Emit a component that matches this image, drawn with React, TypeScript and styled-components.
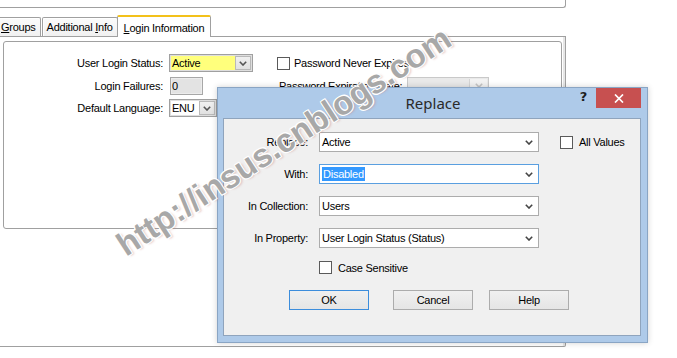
import React from 'react';
import styled, { createGlobalStyle } from 'styled-components';

const GlobalStyle = createGlobalStyle`
  html, body {
    margin: 0;
    padding: 0;
    background: #fff;
  }
  body {
    font-family: "Liberation Sans", Arial, sans-serif;
    font-size: 11px;
    letter-spacing: -0.25px;
    color: #000;
  }
`;

const Page = styled.div`
  position: relative;
  width: 677px;
  height: 358px;
  overflow: hidden;
  background: #fff;
`;

const PrevGroup = styled.div`
  width: 565px;
  height: 7px;
  border-right: 1px solid #a0a0a0;
  border-bottom: 1px solid #a0a0a0;
  border-bottom-right-radius: 3px;
`;

const TabStrip = styled.div`
  display: flex;
  align-items: flex-end;
  height: 21px;
  margin-top: 7px;
`;

const Tab = styled.div<{ $active?: boolean; $first?: boolean }>`
  position: relative;
  z-index: ${p => (p.$active ? 2 : 1)};
  box-sizing: border-box;
  height: ${p => (p.$active ? 22 : 19)}px;
  margin-bottom: ${p => (p.$active ? -1 : 0)}px;
  margin-left: ${p => (p.$first ? -4 : p.$active ? -1 : 1)}px;
  padding: 0 ${p => (p.$active ? 6 : 4)}px;
  display: flex;
  align-items: center;
  padding-top: ${p => (p.$active ? 1 : 0)}px;
  border: 1px solid #a0a0a0;
  border-bottom: none;
  border-top: ${p => (p.$active ? '2px solid #f3c11a' : '1px solid #a0a0a0')};
  border-radius: 2px 2px 0 0;
  background: ${p => (p.$active ? '#fff' : 'linear-gradient(#fbfbfb, #f1f1f1)')};
  box-shadow: ${p => (p.$active ? 'none' : 'inset 1px 1px 0 #fff')};
  white-space: nowrap;
`;

const Key = styled.span`
  text-decoration: underline;
`;

const TabPage = styled.div`
  box-sizing: border-box;
  width: 566px;
  height: 311px;
  border-top: 1px solid #a0a0a0;
  border-right: 1px solid #a0a0a0;
  border-bottom: 1px solid #a0a0a0;
  border-bottom-right-radius: 2px;
  box-shadow: inset -2px 0 0 #e6e6e6;
  padding-top: 4px;
  padding-left: 3px;
`;

const GroupBox = styled.div`
  box-sizing: border-box;
  width: 559px;
  height: 188px;
  border: 1px solid #a0a0a0;
  border-radius: 3px;
  padding-top: 12px;
`;

const FormGrid = styled.div`
  display: grid;
  grid-template-columns: 165px 108px 1fr;
  grid-template-rows: 18px 18px 18px;
  row-gap: 4.5px;
  align-items: center;
`;

const FormLabel = styled.div`
  text-align: right;
  padding-right: 6px;
  white-space: nowrap;
`;

const ClassicCombo = styled.div<{ $width: number }>`
  box-sizing: border-box;
  width: ${p => p.$width}px;
  height: 18px;
  display: flex;
  border: 1px solid #a0a0a0;
  box-shadow: inset 0 0 0 1px #dedede;
  padding: 1px;
  background: #fff;
`;

const ClassicValue = styled.div<{ $fill?: string }>`
  flex: 1;
  display: flex;
  align-items: center;
  padding-left: 1px;
  background: ${p => p.$fill || '#fff'};
`;

const DropButton = styled.div`
  box-sizing: border-box;
  width: 16px;
  display: flex;
  align-items: center;
  justify-content: center;
  background: linear-gradient(#f0f0f0, #e1e1e1);
  border: 1px solid #b9b9b9;
`;

const ReadOnlyBox = styled.div`
  box-sizing: border-box;
  width: 33px;
  height: 18px;
  margin-left: 1px;
  display: flex;
  align-items: center;
  padding-left: 1px;
  background: #e3e3e3;
  border: 1px solid #a7a7a7;
  box-shadow: inset 0 0 0 1px #ececec;
`;

const CheckRow = styled.label`
  display: flex;
  align-items: center;
  gap: 4px;
  white-space: nowrap;
`;

const CheckBox = styled.span`
  box-sizing: border-box;
  width: 13px;
  height: 13px;
  border: 1px solid #5a5a5a;
  background: #fff;
`;

const ExpiryRow = styled.div`
  display: flex;
  align-items: center;
  padding-left: 2px;
`;

const ExpiryLabel = styled.div`
  width: 128px;
  white-space: nowrap;
  overflow: hidden;
`;

const DisabledCombo = styled.div`
  box-sizing: border-box;
  width: 82px;
  height: 18px;
  display: flex;
  border: 1px solid #c9c9c9;
  background: #e9e9e9;
  padding: 1px;
`;

const DisabledDrop = styled.div`
  width: 17px;
  margin-left: auto;
  display: flex;
  align-items: center;
  justify-content: center;
  background: #f2f2f2;
  border-left: 1px solid #d4d4d4;
`;

const Dialog = styled.div`
  position: absolute;
  left: 217px;
  top: 87px;
  z-index: 5;
  box-sizing: border-box;
  width: 431px;
  height: 256px;
  display: flex;
  flex-direction: column;
  padding: 0 6px 6px 5px;
  background: #aecae9;
  border: 1px solid #8aa5c4;
  box-shadow: 0 0 6px rgba(0, 0, 0, 0.18);
`;

const TitleBar = styled.div`
  display: grid;
  grid-template-columns: 1fr auto 1fr;
  height: 30px;
`;

const Title = styled.div`
  font-family: "Noto Sans", "Open Sans", sans-serif;
  font-size: 15px;
  letter-spacing: 0;
  line-height: 30px;
  color: #2a2a2a;
  margin-left: 2px;
`;

const TitleButtons = styled.div`
  justify-self: end;
  display: flex;
  align-items: flex-start;
`;

const HelpGlyph = styled.div`
  font-family: "DejaVu Sans", sans-serif;
  font-weight: bold;
  font-size: 13px;
  line-height: 20px;
  color: #1e1e1e;
  margin-right: 9px;
  margin-top: -1px;
`;

const CloseButton = styled.div`
  width: 45px;
  height: 20px;
  display: flex;
  align-items: center;
  justify-content: center;
  background: #c75050;
`;

const Client = styled.div`
  flex: 1;
  background: #f0f0f0;
  border: 1px solid #8fa4bd;
  padding-top: 13px;
`;

const FieldGrid = styled.div`
  display: grid;
  grid-template-columns: 95px 220px auto;
  grid-auto-rows: 20px;
  row-gap: 12px;
  align-items: center;
`;

const FieldLabel = styled.div`
  text-align: right;
  padding-right: 11px;
  white-space: nowrap;
`;

const Combo = styled.div<{ $focused?: boolean }>`
  box-sizing: border-box;
  height: 20px;
  display: flex;
  align-items: center;
  justify-content: space-between;
  padding: 0 5px 0 2px;
  background: #fff;
  border: 1px solid ${p => (p.$focused ? '#5a9fe0' : '#acacac')};
`;

const Selected = styled.span`
  background: #3399ff;
  color: #fff;
  padding: 1px 1px;
`;

const SideCheck = styled(CheckRow)`
  padding-left: 21px;
  gap: 6px;
`;

const CaseRow = styled(CheckRow)`
  margin-top: 13px;
  padding-left: 95px;
  gap: 6px;
`;

const ButtonRow = styled.div`
  display: flex;
  margin-top: 16px;
  padding-left: 65px;
`;

const Button = styled.div<{ $default?: boolean; $gap?: number }>`
  box-sizing: border-box;
  width: 80px;
  height: 20px;
  margin-left: ${p => p.$gap || 0}px;
  display: flex;
  align-items: center;
  justify-content: center;
  background: linear-gradient(#f0f0f0, #e5e5e5);
  border: 1px solid ${p => (p.$default ? '#3c8ddc' : '#acacac')};
`;

const Watermark = styled.div`
  position: absolute;
  left: 126px;
  top: 229px;
  z-index: 10;
  font-family: "Liberation Sans", Arial, sans-serif;
  font-weight: bold;
  font-size: 33px;
  line-height: 33px;
  letter-spacing: 0;
  white-space: nowrap;
  color: #a8a8a8;
  transform: rotate(-33deg);
  transform-origin: 0 28px;
  text-shadow: 1px 1px 0 #fff, -1px -1px 0 #fff, 1px -1px 0 #fff, -1px 1px 0 #fff, 2px 2px 2px rgba(190, 120, 120, 0.35);
  pointer-events: none;
`;

const Chevron = ({ color = '#444', w = 8 }: { color?: string; w?: number }) => (
  <svg width={w} height="5" viewBox="0 0 8 5">
    <path d="M0.8 0.8 L4 4 L7.2 0.8" fill="none" stroke={color} strokeWidth="1.6" />
  </svg>
);

const CloseGlyph = () => (
  <svg width="10" height="9" viewBox="0 0 10 9">
    <path d="M1 0.5 L9 8.5 M9 0.5 L1 8.5" stroke="#fff" strokeWidth="1.7" />
  </svg>
);

const ReplaceDialog = () => (
  <Dialog>
    <TitleBar>
      <span />
      <Title>Replace</Title>
      <TitleButtons>
        <HelpGlyph>?</HelpGlyph>
        <CloseButton>
          <CloseGlyph />
        </CloseButton>
      </TitleButtons>
    </TitleBar>
    <Client>
      <FieldGrid>
        <FieldLabel>Replace:</FieldLabel>
        <Combo>
          <span>Active</span>
          <Chevron />
        </Combo>
        <SideCheck>
          <CheckBox />
          All Values
        </SideCheck>

        <FieldLabel>With:</FieldLabel>
        <Combo $focused>
          <Selected>Disabled</Selected>
          <Chevron />
        </Combo>
        <span />

        <FieldLabel>In Collection:</FieldLabel>
        <Combo>
          <span>Users</span>
          <Chevron />
        </Combo>
        <span />

        <FieldLabel>In Property:</FieldLabel>
        <Combo>
          <span>User Login Status (Status)</span>
          <Chevron />
        </Combo>
        <span />
      </FieldGrid>
      <CaseRow>
        <CheckBox />
        Case Sensitive
      </CaseRow>
      <ButtonRow>
        <Button $default>OK</Button>
        <Button $gap={24}>Cancel</Button>
        <Button $gap={16}>Help</Button>
      </ButtonRow>
    </Client>
  </Dialog>
);

export default function App() {
  return (
    <Page>
      <GlobalStyle />
      <PrevGroup />
      <TabStrip>
        <Tab $first>
          <span>
            <Key>G</Key>roups
          </span>
        </Tab>
        <Tab>
          <span>
            Additional <Key>I</Key>nfo
          </span>
        </Tab>
        <Tab $active>
          <span>
            <Key>L</Key>ogin Information
          </span>
        </Tab>
      </TabStrip>
      <TabPage>
        <GroupBox>
          <FormGrid>
            <FormLabel>User Login Status:</FormLabel>
            <ClassicCombo $width={84}>
              <ClassicValue $fill="#ffff7c">Active</ClassicValue>
              <DropButton>
                <Chevron color="#555" />
              </DropButton>
            </ClassicCombo>
            <CheckRow>
              <CheckBox />
              Password Never Expires
            </CheckRow>

            <FormLabel>Login Failures:</FormLabel>
            <ReadOnlyBox>0</ReadOnlyBox>
            <ExpiryRow>
              <ExpiryLabel>Password Expiration Date:</ExpiryLabel>
              <DisabledCombo>
                <DisabledDrop>
                  <Chevron color="#c4c4c4" />
                </DisabledDrop>
              </DisabledCombo>
            </ExpiryRow>

            <FormLabel>Default Language:</FormLabel>
            <ClassicCombo $width={48}>
              <ClassicValue>ENU</ClassicValue>
              <DropButton>
                <Chevron color="#555" />
              </DropButton>
            </ClassicCombo>
            <span />
          </FormGrid>
        </GroupBox>
      </TabPage>
      <ReplaceDialog />
      <Watermark>http://insus.cnblogs.com</Watermark>
    </Page>
  );
}
